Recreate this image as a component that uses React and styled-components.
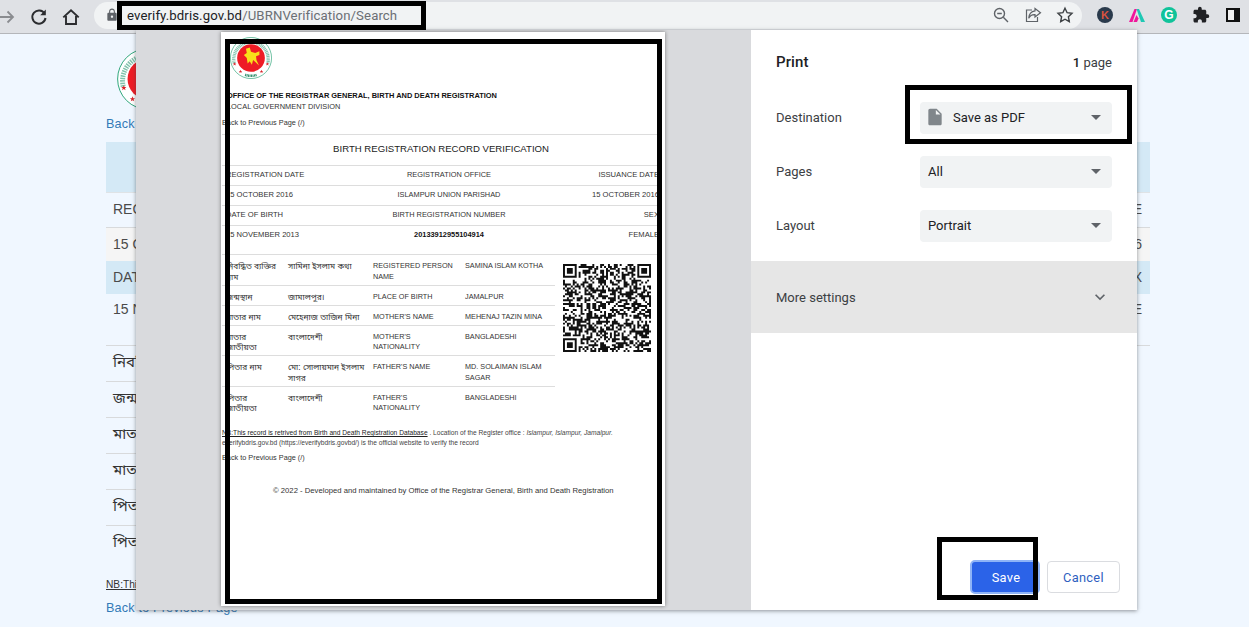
import React from "react";
import styled, { createGlobalStyle } from "styled-components";
import { MdExtension, MdInsertDriveFile, MdExpandMore, MdLock } from "react-icons/md";

const Global = createGlobalStyle`
  html, body { margin: 0; padding: 0; background: #f0f7ff; }
  body { font-family: "Liberation Sans", Arial, sans-serif; }
`;

const BN = `"Liberation Sans", "Noto Sans Bengali", "Lohit Bengali", "Noto Sans", sans-serif`;

const Screen = styled.div`
  position: relative;
  width: 1249px;
  height: 627px;
  overflow: hidden;
  background: #f0f7ff;
`;

/* ---------- browser chrome ---------- */
const Toolbar = styled.header`
  height: 33px;
  display: flex;
  align-items: center;
  background: #dfe1e5;
  border-bottom: 1px solid #b4b6ba;
`;
const NavIcon = styled.span`
  width: 32px;
  height: 30px;
  display: flex;
  align-items: center;
  justify-content: center;
  flex: none;
  margin-left: ${(p) => p.$ml || 0}px;
`;
const Omnibox = styled.div`
  flex: none;
  width: 988px;
  height: 27px;
  margin-left: 7px;
  margin-top: -3px;
  border-radius: 14px;
  background: #f1f3f4;
  display: flex;
  align-items: center;
  padding: 0 0 0 11px;
  box-sizing: border-box;
`;
const Url = styled.span`
  margin-left: 8px;
  font: 400 13.2px Roboto, sans-serif;
  color: #202124;
  white-space: nowrap;
  letter-spacing: 0.1px;
  flex: 1;
`;
const UrlPath = styled.span`
  color: #6b6f75;
`;
const OmniActions = styled.div`
  display: flex;
  gap: 12px;
  padding-right: 7px;
`;
const OmniIcon = styled.span`
  width: 20px;
  height: 20px;
  display: flex;
  align-items: center;
  justify-content: center;
`;
const Extensions = styled.div`
  display: flex;
  margin-left: 7px;
  margin-top: -3px;
`;
const ExtSlot = styled.span`
  width: 32px;
  height: 24px;
  display: flex;
  align-items: center;
  justify-content: center;
`;
const ExtBadge = styled.span`
  width: 16px;
  height: 16px;
  border-radius: 50%;
  background: ${(p) => p.$bg};
  color: ${(p) => p.$fg};
  font: 700 ${(p) => p.$fs || 11}px "Liberation Sans", sans-serif;
  display: flex;
  align-items: center;
  justify-content: center;
`;

/* ---------- page behind the dialog ---------- */
const Page = styled.main`
  padding: 14px 99px 0 106px;
`;
const PageLogo = styled.div`
  margin-left: 11px;
  height: 62px;
`;
const BackLink = styled.a`
  display: block;
  color: #337ab7;
  font-size: 12.6px;
  line-height: 18px;
  letter-spacing: 0.2px;
`;
const TopBack = styled(BackLink)`
  margin-top: 5px;
  margin-bottom: 9px;
`;
const BottomBack = styled(BackLink)`
  margin-top: 7px;
`;
const Band = styled.div`
  height: 51px;
  background: #d4e9f6;
  border-bottom: 1px solid #dfe3e6;
  box-sizing: border-box;
`;
const DataRow = styled.div`
  height: ${(p) => p.$h}px;
  box-sizing: border-box;
  padding: ${(p) => p.$pt || 7}px 8px 0 7px;
  display: flex;
  justify-content: space-between;
  background: ${(p) => p.$bg || "transparent"};
  color: #4a4a4a;
  font-size: 14px;
  line-height: 18px;
  border-top: ${(p) => (p.$line ? "1px solid #d8dadc" : "0")};
  border-bottom: ${(p) => (p.$under ? "1px solid #d8dadc" : "0")};
`;
const BnRow = styled.div`
  width: 500px;
  height: 36px;
  box-sizing: border-box;
  padding: 6px 7px 0;
  font-family: ${BN};
  color: #333;
  font-size: 15px;
  line-height: 20px;
  border-bottom: 1px solid #d8dadc;
  &:nth-last-of-type(1) { border-bottom: 0; }
`;
const BnRows = styled.div``;
const PageNote = styled.div`
  margin-top: 16px;
  font-size: 10.2px;
  line-height: 14px;
  color: #333;
  text-decoration: underline;
`;

/* ---------- print dialog ---------- */
const Dialog = styled.section`
  position: absolute;
  left: 136px;
  top: 30px;
  width: 1001px;
  height: 580px;
  display: grid;
  grid-template-columns: 615px 386px;
  box-shadow: 0 1px 4px rgba(60, 64, 67, 0.55);
`;
const Preview = styled.div`
  background: #d9dadd;
  padding: 2px 0 0 85px;
  overflow: hidden;
`;
const Paper = styled.article`
  width: 444px;
  height: 574px;
  box-sizing: border-box;
  background: #fff;
  box-shadow: 0 0 4px rgba(0, 0, 0, 0.45);
  padding: 5px 4px 0 1px;
  color: #333;
  font-size: 7.4px;
  overflow: hidden;
`;
const DocLogo = styled.div`
  margin-left: 8px;
  height: 42px;
`;
const DocTitle = styled.div`
  margin: 12px 0 0 5px;
  font-size: 7.43px;
  font-weight: 700;
  line-height: 10px;
  color: #111;
  white-space: nowrap;
`;
const DocDivision = styled.div`
  margin: 1px 0 0 5px;
  font-size: 7.4px;
  line-height: 10px;
`;
const DocBack = styled.div`
  font-size: 7.3px;
  line-height: 10px;
  margin-top: ${(p) => p.$mt}px;
  white-space: nowrap;
`;
const DocHeading = styled.h1`
  margin: 6px 0 0;
  height: 30px;
  border-top: 1px solid #ddd;
  border-bottom: 1px solid #ddd;
  font-size: 9.6px;
  font-weight: 400;
  line-height: 28px;
  text-align: center;
  padding-right: 1px;
  color: #222;
`;
const InfoRow = styled.div`
  display: grid;
  grid-template-columns: 150px 1fr 137px;
  height: ${(p) => p.$h || 19}px;
  line-height: 18px;
  padding: 0 2px 0 4px;
  border-bottom: 1px solid #ddd;
  white-space: nowrap;
`;
const StartCell = styled.span`
  font-size: 7.6px;
`;
const CenterCell = styled.span`
  text-align: center;
  font-weight: ${(p) => (p.$bold ? 700 : 400)};
  color: ${(p) => (p.$bold ? "#111" : "inherit")};
`;
const EndCell = styled.span`
  text-align: right;
  font-size: 7.6px;
`;
const Details = styled.div`
  display: flex;
  align-items: flex-start;
`;
const DetailTable = styled.div`
  width: 333px;
  flex: none;
`;
const DetailRow = styled.div`
  display: grid;
  grid-template-columns: 62px 85px 92px 1fr;
  padding: 6px 0 2.5px 4px;
  font-size: 7.25px;
  line-height: 10.5px;
  white-space: pre-line;
  border-bottom: ${(p) => (p.$last ? "0" : "1px solid #ddd")};
`;
const BnCell = styled.span`
  font-family: ${BN};
  font-size: 8.3px;
`;
const QrBox = styled.div`
  margin: 9px 0 0 8px;
  width: 88px;
  height: 88px;
  filter: blur(0.35px);
`;
const Note = styled.p`
  margin: 12px 0 0;
  font-size: 6.65px;
  line-height: 9.5px;
  color: #444;
  white-space: nowrap;
`;
const NoteLead = styled.span`
  text-decoration: underline;
  color: #222;
`;
const DocFooter = styled.div`
  margin-top: 23px;
  padding-left: 51px;
  font-size: 7.7px;
  line-height: 10px;
  white-space: nowrap;
`;

/* ---------- settings side ---------- */
const Side = styled.aside`
  background: #fff;
  display: flex;
  flex-direction: column;
  font-family: Roboto, sans-serif;
  color: #202124;
`;
const SideHead = styled.div`
  height: 62px;
  box-sizing: border-box;
  padding: 2px 25px 0;
  margin-bottom: 10px;
  display: flex;
  align-items: center;
  justify-content: space-between;
`;
const SideTitle = styled.h2`
  margin: 0;
  font-size: 15px;
  font-weight: 500;
  letter-spacing: 0.1px;
`;
const PageCount = styled.span`
  font-size: 13px;
  color: #3c4043;
`;
const PageNum = styled.b`
  font-weight: 500;
  color: #202124;
`;
const Setting = styled.div`
  display: grid;
  grid-template-columns: 144px 192px;
  padding-left: 25px;
  align-items: center;
  height: 32px;
  margin-bottom: 22px;
  font-size: 13px;
  color: #3c4043;
`;
const SettingLabel = styled.span`
  margin-top: -2px;
`;
const Select = styled.div`
  height: 32px;
  box-sizing: border-box;
  border-radius: 4px;
  background: #f1f3f4;
  display: flex;
  align-items: center;
  padding: 0 8px 2px;
  color: #202124;
  justify-content: space-between;
`;
const SelectValue = styled.span`
  display: flex;
  align-items: center;
  gap: 8px;
  margin-left: ${(p) => p.$ml || 0}px;
`;
const Caret = styled.span`
  width: 0;
  height: 0;
  margin-right: 3px;
  border-left: 5px solid transparent;
  border-right: 5px solid transparent;
  border-top: 5px solid #5f6368;
`;
const More = styled.div`
  height: 72px;
  margin-top: -3px;
  background: #e6e6e6;
  display: flex;
  align-items: center;
  justify-content: space-between;
  padding: 0 27px 0 25px;
  font-size: 13px;
  color: #3c4043;
`;
const Actions = styled.div`
  margin-top: auto;
  padding: 0 17px 16px 0;
  display: flex;
  justify-content: flex-end;
  align-items: center;
  gap: 7px;
`;
const SaveButton = styled.button`
  width: 70px;
  height: 34px;
  box-sizing: border-box;
  border: 2px solid #8fb4f7;
  border-radius: 5px;
  background: #2b63e8;
  color: #fff;
  font: 400 12.8px Roboto, sans-serif;
  letter-spacing: 0.3px;
  padding: 0 0 0 2px;
`;
const CancelButton = styled.button`
  width: 73px;
  height: 32px;
  box-sizing: border-box;
  border: 1px solid #dadce0;
  border-radius: 4px;
  background: #fff;
  color: #2f5fbf;
  font: 400 12.8px Roboto, sans-serif;
  letter-spacing: 0.3px;
  padding: 0;
`;

/* ---------- black annotation boxes laid over the screenshot ---------- */
const Marker = styled.div`
  position: absolute;
  left: ${(p) => p.$x}px;
  top: ${(p) => p.$y}px;
  width: ${(p) => p.$w}px;
  height: ${(p) => p.$h}px;
  box-sizing: border-box;
  border: 5px solid #000;
  pointer-events: none;
`;

/* ---------- drawings ---------- */
const Emblem = ({ size }) => (
  <svg width={size} height={size} viewBox="0 0 100 100" aria-hidden="true">
    <circle cx="50" cy="50" r="49" fill="#fff" stroke="#2fa67a" strokeWidth="1.6" />
    <path d="M10 62 A41 41 0 1 1 90 62" fill="none" stroke="#4aa887" strokeWidth="8" strokeDasharray="2.4 1.5" opacity="0.7" />
    <circle cx="50" cy="50" r="33" fill="#ee1c25" />
    <path d="M38 28 L47 25 L50 35 L60 38 L70 34 L70 43 L62 46 L63 55 L69 68 L61 60 L55 55 L52 66 L47 58 L42 63 L40 50 L33 43 L40 38 Z" fill="#f8e11a" />
    <g fill="#d8232a">
      <path d="m11 60 1.2 3h3l-2.4 2 1 3-2.8-1.8L8.200 68l1-3-2.400-2h3z" />
      <path d="m25 78 1.2 3h3l-2.400 2 1 3-2.800-1.800L22.200 86l1-3-2.400-2h3z" />
      <path d="m89 60 1.200 3h3l-2.400 2 1 3-2.800-1.800L86.200 68l1-3-2.400-2h3z" />
      <path d="m75 78 1.200 3h3l-2.400 2 1 3-2.800-1.800L72.200 86l1-3-2.400-2h3z" />
    </g>
    <path d="M36 90 Q50 95 64 90" fill="none" stroke="#2f8f6c" strokeWidth="6" strokeDasharray="2.4 1.2" />
  </svg>
);

const QrCode = () => {
  const n = 45;
  const cells = [];
  let seed = 20133912;
  const next = () => {
    seed = (seed * 1664525 + 1013904223) % 4294967296;
    return seed / 4294967296;
  };
  const inFinder = (x, y) =>
    (x < 8 && y < 8) || (x >= n - 8 && y < 8) || (x < 8 && y >= n - 8);
  for (let y = 0; y < n; y++) {
    for (let x = 0; x < n; x++) {
      if (!inFinder(x, y) && next() > 0.5) cells.push(`M${x} ${y}h1v1h-1z`);
    }
  }
  const finder = (x, y) =>
    `M${x} ${y}h7v7h-7z M${x + 1} ${y + 1}v5h5v-5z M${x + 2} ${y + 2}h3v3h-3z`;
  return (
    <svg width="88" height="88" viewBox={`0 0 ${n} ${n}`} aria-hidden="true">
      <path d={cells.join("")} fill="#111" />
      <path d={`${finder(0, 0)} ${finder(n - 7, 0)} ${finder(0, n - 7)}`} fill="#111" fillRule="evenodd" />
    </svg>
  );
};

const infoRows = [
  ["REGISTRATION DATE", "REGISTRATION OFFICE", "ISSUANCE DATE"],
  ["15 OCTOBER 2016", "ISLAMPUR UNION PARISHAD", "15 OCTOBER 2016"],
  ["DATE OF BIRTH", "BIRTH REGISTRATION NUMBER", "SEX"],
  ["15 NOVEMBER 2013", "20133912955104914", "FEMALE"],
];

const details = [
  ["নিবন্ধিত ব্যক্তির\nনাম", "সামিনা ইসলাম কথা", "REGISTERED PERSON\nNAME", "SAMINA ISLAM KOTHA"],
  ["জন্মস্থান", "জামালপুর।", "PLACE OF BIRTH", "JAMALPUR"],
  ["মাতার নাম", "মেহেনাজ তাজিন মিনা", "MOTHER'S NAME", "MEHENAJ TAZIN MINA"],
  ["মাতার\nজাতীয়তা", "বাংলাদেশী", "MOTHER'S\nNATIONALITY", "BANGLADESHI"],
  ["পিতার নাম", "মো: সোলায়মান ইসলাম\nসাগর", "FATHER'S NAME", "MD. SOLAIMAN ISLAM\nSAGAR"],
  ["পিতার\nজাতীয়তা", "বাংলাদেশী", "FATHER'S\nNATIONALITY", "BANGLADESHI"],
];

const pageRows = ["নিবন্ধিত ব্যক্তির নাম", "জন্মস্থান", "মাতার নাম", "মাতার জাতীয়তা", "পিতার নাম", "পিতার জাতীয়তা"];

export default function App() {
  return (
    <Screen>
      <Global />
      <Toolbar>
        <NavIcon $ml={-9}>
          <svg width="18" height="18" viewBox="0 0 18 18" fill="none" stroke="#8a8c90" strokeWidth="1.8">
            <path d="M1 9h14M9.500 3.500 15 9l-5.500 5.500" />
          </svg>
        </NavIcon>
        <NavIcon>
          <svg width="18" height="18" viewBox="0 0 18 18" fill="none" stroke="#2b2c2f" strokeWidth="2">
            <path d="M14.600 5.600A6.600 6.600 0 1 0 15.500 10" />
            <path d="M15.800 1.600v5.600h-5.600z" fill="#2b2c2f" stroke="none" />
          </svg>
        </NavIcon>
        <NavIcon>
          <svg width="18" height="18" viewBox="0 0 18 18" fill="none" stroke="#2b2c2f" strokeWidth="1.9">
            <path d="M1.300 9.400 9 2.200l7.700 7.200M4 8v8h10V8" />
          </svg>
        </NavIcon>
        <Omnibox>
          <MdLock size={14} color="#5f6368" />
          <Url>
            everify.bdris.gov.bd<UrlPath>/UBRNVerification/Search</UrlPath>
          </Url>
          <OmniActions>
            <OmniIcon>
              <svg width="18" height="18" viewBox="0 0 18 18" fill="none" stroke="#5f6368" strokeWidth="1.4">
                <circle cx="7.500" cy="7.500" r="5" />
                <path d="M5.200 7.500h4.600M11.300 11.300 16 16" />
              </svg>
            </OmniIcon>
            <OmniIcon>
              <svg width="18" height="18" viewBox="0 0 18 18" fill="none" stroke="#5f6368" strokeWidth="1.2">
                <path d="M8 4H2.500v11.500h11V11" />
                <path d="M11 2.500 16.500 6.700 11 11V8.600C8 8.400 6 9.600 4.700 12.300 5 8.400 7.200 5.400 11 4.900Z" />
              </svg>
            </OmniIcon>
            <OmniIcon>
              <svg width="18" height="18" viewBox="0 0 18 18" fill="none" stroke="#3c4043" strokeWidth="1.4">
                <path d="m9 2.200 2.100 4.500 4.900.6-3.600 3.400.9 4.900L9 13.200l-4.300 2.400.9-4.900L2 7.300l4.900-.6z" />
              </svg>
            </OmniIcon>
          </OmniActions>
        </Omnibox>
        <Extensions>
          <ExtSlot>
            <ExtBadge $bg="#2a3a4c" $fg="#d9533f">K</ExtBadge>
          </ExtSlot>
          <ExtSlot>
            <svg width="16" height="16" viewBox="0 0 16 16">
              <path d="M0 15 5.500 2H8L3.500 15z" fill="#f0179b" />
              <path d="M4.500 15 7.500 8l2 3.500-1.500 3.500z" fill="#f0179b" />
              <path d="M7.500 2H10l6 13h-4z" fill="#1fc8b4" />
            </svg>
          </ExtSlot>
          <ExtSlot>
            <ExtBadge $bg="#10c39a" $fg="#fff" $fs={12}>G</ExtBadge>
          </ExtSlot>
          <ExtSlot>
            <MdExtension size={18} color="#202124" />
          </ExtSlot>
          <ExtSlot>
            <svg width="14" height="14" viewBox="0 0 14 14">
              <rect width="14" height="14" fill="#111" />
              <rect x="2" y="2" width="6" height="10" fill="#f0f0f0" />
            </svg>
          </ExtSlot>
        </Extensions>
      </Toolbar>

      <Page>
        <PageLogo>
          <Emblem size={62} />
        </PageLogo>
        <TopBack>Back to Previous Page</TopBack>
        <Band />
        <DataRow $h={34}>
          <span>REGISTRATION DATE</span>
          <span>ISSUANCE DATE</span>
        </DataRow>
        <DataRow $h={34} $bg="#f5f5f5" $line>
          <span>15 OCTOBER 2016</span>
          <span>15 OCTOBER 2016</span>
        </DataRow>
        <DataRow $h={33} $bg="#d4e9f6">
          <span>DATE OF BIRTH</span>
          <span>SEX</span>
        </DataRow>
        <DataRow $h={52} $pt={6} $under>
          <span>15 NOVEMBER 2013</span>
          <span>FEMALE</span>
        </DataRow>
        <BnRows>
          {pageRows.map((label) => (
            <BnRow key={label}>{label}</BnRow>
          ))}
        </BnRows>
        <PageNote>NB:This record is retrived from Birth and Death Registration Database</PageNote>
        <BottomBack>Back to Previous Page</BottomBack>
      </Page>

      <Dialog>
        <Preview>
          <Paper>
            <DocLogo>
              <Emblem size={42} />
            </DocLogo>
            <DocTitle>OFFICE OF THE REGISTRAR GENERAL, BIRTH AND DEATH REGISTRATION</DocTitle>
            <DocDivision>LOCAL GOVERNMENT DIVISION</DocDivision>
            <DocBack $mt={6}>Back to Previous Page (/)</DocBack>
            <DocHeading>BIRTH REGISTRATION RECORD VERIFICATION</DocHeading>
            {infoRows.map((r, i) => (
              <InfoRow key={r[0]} $h={i === 3 ? 28 : 19}>
                <StartCell>{r[0]}</StartCell>
                <CenterCell $bold={i === 3}>{r[1]}</CenterCell>
                <EndCell>{r[2]}</EndCell>
              </InfoRow>
            ))}
            <Details>
              <DetailTable>
                {details.map((d, i) => (
                  <DetailRow key={d[0]} $last={i === details.length - 1}>
                    <BnCell>{d[0]}</BnCell>
                    <BnCell>{d[1]}</BnCell>
                    <span>{d[2]}</span>
                    <span>{d[3]}</span>
                  </DetailRow>
                ))}
              </DetailTable>
              <QrBox>
                <QrCode />
              </QrBox>
            </Details>
            <Note>
              <NoteLead>NB:This record is retrived from Birth and Death Registration Database</NoteLead> . Location of the Register office : <i>Islampur, Islampur, Jamalpur.</i>
              <br />
              everifybdris.gov.bd (https://everifybdris.govbd/) is the official website to verify the record
            </Note>
            <DocBack $mt={6}>Back to Previous Page (/)</DocBack>
            <DocFooter>© 2022 - Developed and maintained by Office of the Registrar General, Birth and Death Registration</DocFooter>
          </Paper>
        </Preview>
        <Side>
          <SideHead>
            <SideTitle>Print</SideTitle>
            <PageCount><PageNum>1</PageNum> page</PageCount>
          </SideHead>
          <Setting>
            <SettingLabel>Destination</SettingLabel>
            <Select>
              <SelectValue $ml={-3}>
                <MdInsertDriveFile size={20} color="#80868b" />
                Save as PDF
              </SelectValue>
              <Caret />
            </Select>
          </Setting>
          <Setting>
            <SettingLabel>Pages</SettingLabel>
            <Select>
              <SelectValue>All</SelectValue>
              <Caret />
            </Select>
          </Setting>
          <Setting>
            <SettingLabel>Layout</SettingLabel>
            <Select>
              <SelectValue>Portrait</SelectValue>
              <Caret />
            </Select>
          </Setting>
          <More>
            <span>More settings</span>
            <MdExpandMore size={20} color="#5f6368" />
          </More>
          <Actions>
            <SaveButton>Save</SaveButton>
            <CancelButton>Cancel</CancelButton>
          </Actions>
        </Side>
      </Dialog>

      <Marker $x={117} $y={1} $w={309} $h={29} />
      <Marker $x={225} $y={39} $w={437} $h={565} />
      <Marker $x={905} $y={85} $w={227} $h={59} />
      <Marker $x={937} $y={537} $w={101} $h={63} />
    </Screen>
  );
}
